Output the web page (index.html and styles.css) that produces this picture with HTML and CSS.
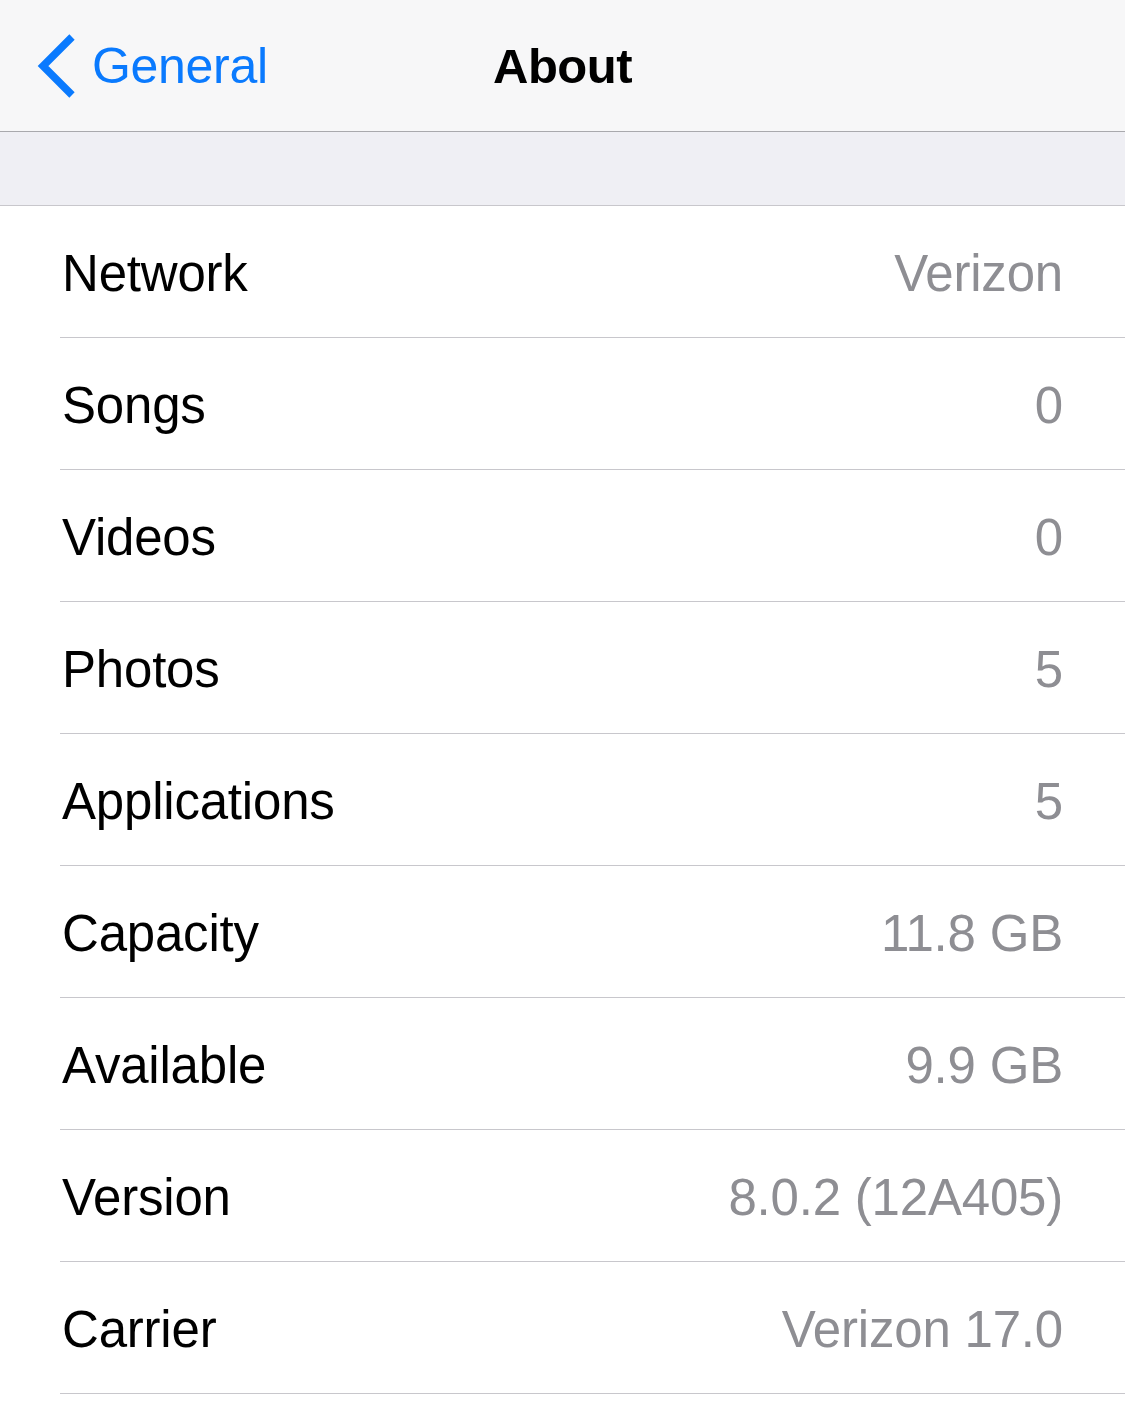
FILE: index.html
```html
<!DOCTYPE html>
<html lang="en">
<head>
<meta charset="utf-8">
<title>About</title>
<link rel="stylesheet" href="styles.css">
</head>
<body>
<div class="screen">
  <header class="navbar">
    <div class="nav-left">
      <svg class="chevron" width="44" height="66" viewBox="0 0 44 66" aria-hidden="true">
        <polyline points="38,4 9,33 38,62" fill="none" stroke="#0a7afe" stroke-width="7.5" stroke-linecap="butt" stroke-linejoin="miter"/>
      </svg>
      <span class="back-label">General</span>
    </div>
    <div class="nav-title">About</div>
    <div class="nav-right"></div>
  </header>
  <div class="section-gap"></div>
  <ul class="table">
    <li class="row"><span class="label">Network</span><span class="value">Verizon</span></li>
    <li class="row"><span class="label">Songs</span><span class="value">0</span></li>
    <li class="row"><span class="label">Videos</span><span class="value">0</span></li>
    <li class="row"><span class="label">Photos</span><span class="value">5</span></li>
    <li class="row"><span class="label">Applications</span><span class="value">5</span></li>
    <li class="row"><span class="label">Capacity</span><span class="value">11.8 GB</span></li>
    <li class="row"><span class="label">Available</span><span class="value">9.9 GB</span></li>
    <li class="row"><span class="label">Version</span><span class="value">8.0.2 (12A405)</span></li>
    <li class="row"><span class="label">Carrier</span><span class="value">Verizon 17.0</span></li>
  </ul>
</div>
</body>
</html>
```
FILE: styles.css
```css
* { box-sizing: border-box; }
html, body {
  margin: 0;
  padding: 0;
  background: #ffffff;
}
body {
  font-family: "Liberation Sans", Arial, sans-serif;
  width: 1125px;
  height: 1425px;
  overflow: hidden;
}
.screen {
  display: flex;
  flex-direction: column;
}
.navbar {
  height: 132px;
  background: #f7f7f8;
  border-bottom: 1px solid #a9a9ad;
  display: grid;
  grid-template-columns: 1fr auto 1fr;
  align-items: center;
  padding: 0 0 0 34px;
}
.nav-left {
  display: flex;
  align-items: center;
  gap: 14px;
  margin-top: 1px;
}
.chevron {
  display: block;
  margin-top: 0;
}
.back-label {
  color: #0a7afe;
  font-size: 50px;
  letter-spacing: -0.3px;
}
.nav-title {
  font-size: 49px;
  font-weight: 700;
  color: #000;
  letter-spacing: -0.5px;
  margin-left: -34px;
}
.section-gap {
  height: 74px;
  background: #efeff4;
  border-bottom: 1px solid #c8c7cc;
}
.table {
  list-style: none;
  margin: 0;
  padding: 0 0 0 60px;
  background: #fff;
}
.row {
  height: 132px;
  border-bottom: 1px solid #c8c7cc;
  display: flex;
  align-items: center;
  justify-content: space-between;
  padding: 4px 62px 0 2px;
  font-size: 51px;
}
.label {
  color: #000;
  letter-spacing: -0.2px;
}
.value {
  color: #8e8e93;
  letter-spacing: -0.2px;
}
```
